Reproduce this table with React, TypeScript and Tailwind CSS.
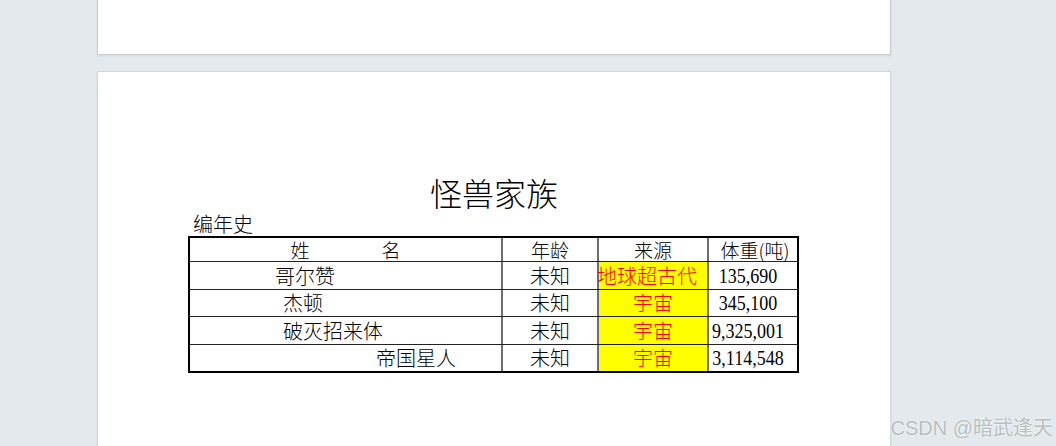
const rows = [
  { name: "哥尔赞", pad: "pl-[85px]", age: "未知", src: "地球超古代", srcAlign: "justify-start -ml-[2px]", weight: "135,690", h: "h-[28px]" },
  { name: "杰顿", pad: "pl-[93px]", age: "未知", src: "宇宙", srcAlign: "justify-center", weight: "345,100", h: "h-[27px]" },
  { name: "破灭招来体", pad: "pl-[93px]", age: "未知", src: "宇宙", srcAlign: "justify-center", weight: "9,325,001", h: "h-[28px]" },
  { name: "帝国星人", pad: "pl-[186px]", age: "未知", src: "宇宙", srcAlign: "justify-center", weight: "3,114,548", h: "h-[26px]" },
]

const cjk = "font-['Noto_Sans_CJK_SC',sans-serif]"

export default function App() {
  return (
    <div className={`relative h-[446px] w-[1056px] overflow-hidden bg-[#e3e9ec] ${cjk} font-light`}>
      {/* previous page, cut off at the top */}
      <div className="ml-[97px] h-[55px] w-[794px] border-x border-b border-[#c9cdcf] bg-white shadow-[0_1px_2px_rgba(0,0,0,0.08)]" />

      {/* current page */}
      <div className="ml-[97px] mt-[16px] h-[400px] w-[794px] border border-[#d3d7d9] bg-white pt-[100px] shadow-[0_1px_2px_rgba(0,0,0,0.08)]">
        <h1 className="text-center text-[32px] leading-[40px] font-light text-black">怪兽家族</h1>

        <div className="ml-[90px] w-[611px]">
          <div className="pl-[5px] text-[20px] leading-[24px] text-black">编年史</div>

          <div className="border-2 border-black text-[19px] text-black">
            {/* header */}
            <div className="grid h-[24px] grid-cols-[311px_96px_110px_90px] border-b border-[#222]">
              <div className="flex items-center justify-center gap-[72px] leading-none">
                <span>姓</span>
                <span>名</span>
              </div>
              <div className="flex items-center justify-center border-l-2 border-[#6e6e6e] leading-none">年龄</div>
              <div className="flex items-center justify-center border-l-2 border-[#6e6e6e] leading-none">来源</div>
              <div className="flex items-center justify-center border-l-2 border-[#6e6e6e] pl-[4px] leading-none">体重(吨)</div>
            </div>

            {rows.map((r, i) => (
              <div
                key={r.name}
                className={`grid grid-cols-[311px_96px_110px_90px] ${r.h} ${i < rows.length - 1 ? "border-b border-[#222]" : ""}`}
              >
                <div className={`flex items-center ${r.pad} text-[20px] leading-none`}>{r.name}</div>
                <div className="flex items-center justify-center border-l-2 border-[#6e6e6e] text-[20px] leading-none">{r.age}</div>
                <div className="flex items-center border-l-2 border-[#6e6e6e] bg-[#ffff00] text-[20px] leading-none text-[#ff0000]">
                  <span className={`flex w-full ${r.srcAlign}`}>{r.src}</span>
                </div>
                <div className="flex items-center justify-center border-l-2 border-[#6e6e6e] pr-[10px] font-['Liberation_Serif',serif] text-[18px] font-normal leading-none">
                  <span className="inline-block scale-y-[1.2]">{r.weight}</span>
                </div>
              </div>
            ))}
          </div>
        </div>
      </div>

      {/* watermark */}
      <div className="absolute right-[3px] top-[417px] font-['Liberation_Sans','Noto_Sans_CJK_SC',sans-serif] text-[20px] font-normal leading-[22px] text-[#b8bec2] [text-shadow:0_0_2px_#ffffff]">
        CSDN @暗武逢天
      </div>
    </div>
  )
}
